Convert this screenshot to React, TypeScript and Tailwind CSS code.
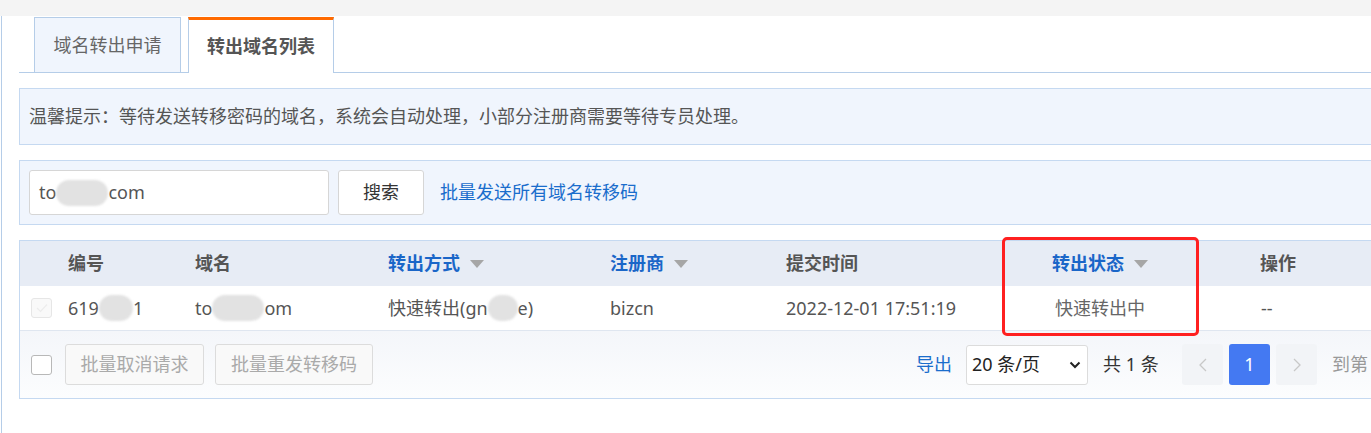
import React from "react";

const FONT = { fontFamily: '"Noto Sans", "Noto Sans CJK SC", sans-serif' };

function SortArrow() {
  return (
    <svg width="14" height="8" viewBox="0 0 14 8" className="ml-[10px] shrink-0">
      <polygon points="0,0 14,0 7,8" fill="#a6a6a6" />
    </svg>
  );
}

function Blot({ w, h = 26 }: { w: number; h?: number }) {
  return (
    <span
      className="inline-block align-middle rounded-[13px] bg-[#e2e2e2] blur-[1px]"
      style={{ width: w, height: h }}
    />
  );
}

export default function App() {
  return (
    <div className="w-[1371px] h-[433px] overflow-hidden bg-white text-[18px]" style={FONT}>
      {/* top strip */}
      <div className="h-[16px] bg-[#f4f4f4]" />

      <div className="ml-px h-[417px] border-l border-[#b5cde8] pl-[17px]">
        <div className="w-[1420px]">
          {/* tabs */}
          <div className="flex h-[57px] items-end gap-[7px] border-b border-[#b5cde8] pl-[15px]">
            <div className="flex h-[55px] w-[147px] items-center justify-center border border-b-0 border-[#b5cde8] bg-[#f0f5fd] text-[#666]">
              域名转出申请
            </div>
            <div className="relative z-10 -mb-px flex h-[56px] w-[146px] items-center justify-center border-x border-t-[3px] border-x-[#b5cde8] border-t-[#ff6a00] bg-white font-bold text-[#555]">
              转出域名列表
            </div>
          </div>

          {/* notice */}
          <div className="mt-[15px] flex h-[57px] items-center border border-[#c5d9f1] bg-[#f0f5fd] pl-[9px] text-[#555]">
            温馨提示：等待发送转移密码的域名，系统会自动处理，小部分注册商需要等待专员处理。
          </div>

          {/* search */}
          <div className="mt-[15px] flex h-[65px] items-center border border-[#c5d9f1] bg-[#f0f5fd] pl-[9px]">
            <div className="flex h-[45px] w-[300px] items-center rounded-[3px] border border-[#d6d6d6] bg-white pl-[9px] text-[#555]">
              <span>to</span>
              <Blot w={52} />
              <span>com</span>
            </div>
            <div className="ml-[9px] flex h-[45px] w-[86px] items-center justify-center rounded-[3px] border border-[#d6d6d6] bg-white text-[#333]">
              搜索
            </div>
            <span className="ml-[16px] text-[#1a6dcc]">批量发送所有域名转移码</span>
          </div>

          {/* table */}
          <div className="relative mt-[15px] border border-[#c5d9f1]">
            <div className="grid h-[45px] grid-cols-[38px_127px_193px_222px_176px_224px_200px_1fr] items-center bg-[#e7ecf5] font-bold text-[#555]">
              <div />
              <div className="pl-[10px]">编号</div>
              <div className="pl-[10px]">域名</div>
              <div className="flex items-center pl-[10px] text-[#1a66c8]">
                转出方式
                <SortArrow />
              </div>
              <div className="flex items-center pl-[10px] text-[#1a66c8]">
                注册商
                <SortArrow />
              </div>
              <div className="pl-[10px]">提交时间</div>
              <div className="flex items-center justify-center text-[#1a66c8]">
                转出状态
                <SortArrow />
              </div>
              <div className="pl-[60px]">操作</div>
            </div>

            <div className="grid h-[45px] grid-cols-[38px_127px_193px_222px_176px_224px_200px_1fr] items-center border-b border-[#dfe6f0] bg-white text-[#555]">
              <div className="pl-[11px]">
                <div className="flex h-[20px] w-[21px] items-center justify-center rounded-[3px] border border-[#e6e6e6] bg-[#f9f9f9]">
                  <svg width="12" height="10" viewBox="0 0 12 10">
                    <path d="M1 5l3.5 3.5L11 1.5" fill="none" stroke="#ececec" strokeWidth="1.2" />
                  </svg>
                </div>
              </div>
              <div className="flex items-center pl-[10px]">
                <span>619</span>
                <Blot w={34} />
                <span>1</span>
              </div>
              <div className="flex items-center pl-[10px]">
                <span>to</span>
                <Blot w={52} />
                <span>om</span>
              </div>
              <div className="flex items-center pl-[10px]">
                <span>快速转出(gn</span>
                <Blot w={30} />
                <span>e)</span>
              </div>
              <div className="pl-[10px]">bizcn</div>
              <div className="pl-[10px]">2022-12-01 17:51:19</div>
              <div className="text-center text-[#666]">快速转出中</div>
              <div className="pl-[61px]">--</div>
            </div>

            <div className="flex h-[67px] items-center bg-gradient-to-b from-[#f4f6fa] to-[#fcfdfe]">
              <div className="ml-[11px] h-[20px] w-[21px] rounded-[3px] border border-[#b8b8b8] bg-white" />
              <div className="ml-[13px] flex h-[41px] w-[139px] items-center justify-center rounded-[3px] border border-[#dcdcdc] bg-[#f9f9f9] text-[#aaa]">
                批量取消请求
              </div>
              <div className="ml-[11px] flex h-[41px] w-[158px] items-center justify-center rounded-[3px] border border-[#dcdcdc] bg-[#f9f9f9] text-[#aaa]">
                批量重发转移码
              </div>

              <span className="ml-[543px] w-[36px] text-[#1a6dcc]">导出</span>
              <div className="ml-[14px] flex h-[40px] w-[122px] items-center justify-between rounded-[3px] border border-[#dcdcdc] bg-white pl-[5px] pr-[6px] text-[#222]">
                <span>20 条/页</span>
                <svg width="12" height="8" viewBox="0 0 12 8">
                  <path d="M1.5 1.5l4.5 4.5 4.5-4.5" fill="none" stroke="#222" strokeWidth="2" />
                </svg>
              </div>
              <span className="ml-[15px] w-[64px] text-[#333]">共 1 条</span>
              <div className="ml-[15px] flex h-[41px] w-[41px] items-center justify-center rounded-[3px] bg-[#f2f4f7]">
                <svg width="8" height="14" viewBox="0 0 8 14">
                  <path d="M7 1L1 7l6 6" fill="none" stroke="#c8c8c8" strokeWidth="1.3" />
                </svg>
              </div>
              <div className="ml-[6px] flex h-[41px] w-[41px] items-center justify-center rounded-[3px] bg-[#4479f2] text-white">
                1
              </div>
              <div className="ml-[6px] flex h-[41px] w-[41px] items-center justify-center rounded-[3px] bg-[#f2f4f7]">
                <svg width="8" height="14" viewBox="0 0 8 14">
                  <path d="M1 1l6 6-6 6" fill="none" stroke="#c8c8c8" strokeWidth="1.3" />
                </svg>
              </div>
              <span className="ml-[15px] text-[#999]">到第</span>
            </div>

            {/* highlight box */}
            <div className="pointer-events-none absolute left-[982px] top-[-4px] h-[99px] w-[197px] rounded-[5px] border-[3px] border-[#ff2020]" />
          </div>
        </div>
      </div>
    </div>
  );
}
